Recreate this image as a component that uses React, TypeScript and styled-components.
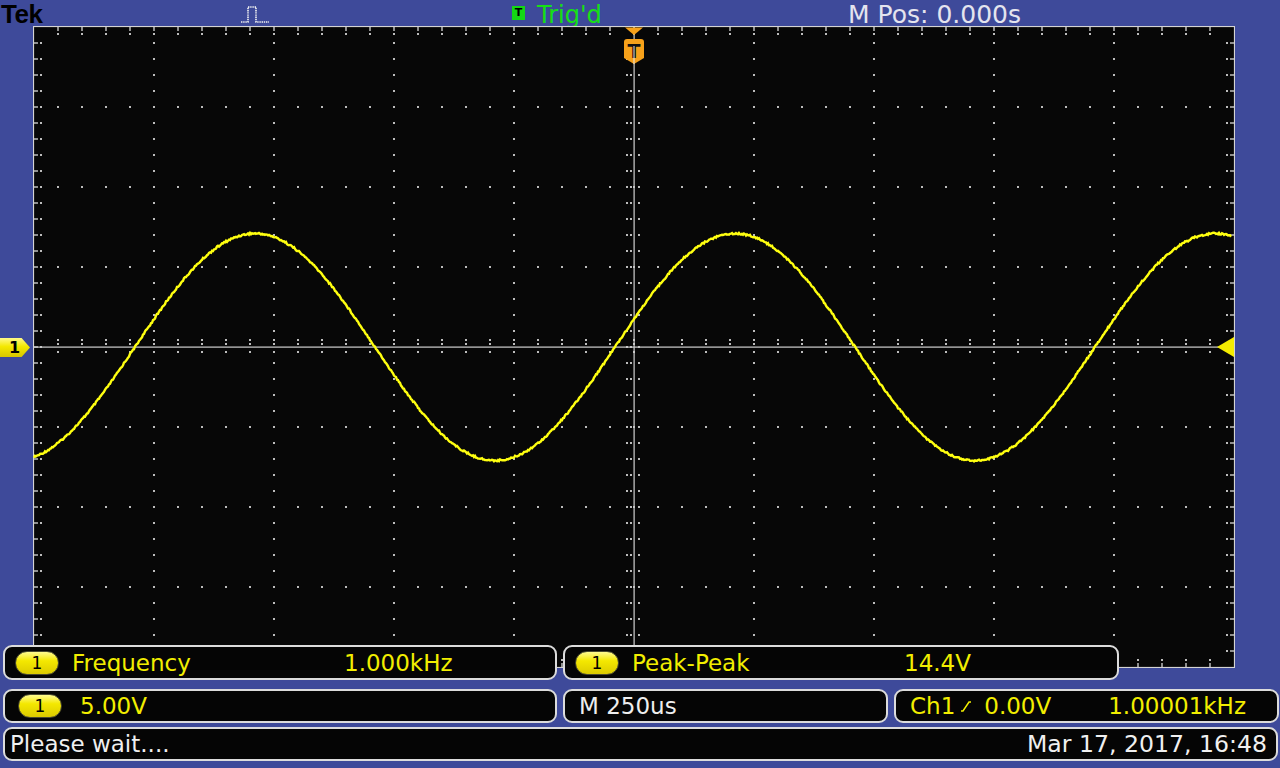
import React from 'react';
import styled, { createGlobalStyle } from 'styled-components';

const BLUE = '#3e4a9a';
const YELLOW = '#f2ee00';
const GRID = '#bdbdbd';

const GlobalStyle = createGlobalStyle`
  html, body {
    margin: 0;
    padding: 0;
    background: ${BLUE};
    overflow: hidden;
  }
`;

const Screen = styled.div`
  width: 1280px;
  height: 768px;
  background: ${BLUE};
  display: flex;
  flex-direction: column;
  font-family: 'DejaVu Sans', Verdana, sans-serif;
  overflow: hidden;
`;

const TopBar = styled.div`
  height: 26px;
  flex: none;
  display: grid;
  grid-template-columns: 240px 272px 336px 1fr;
  align-items: center;
`;

const Tek = styled.div`
  font-family: 'Liberation Sans', Arial, sans-serif;
  font-weight: 700;
  font-size: 26px;
  line-height: 26px;
  color: #000;
  letter-spacing: -0.5px;
  padding-left: 1px;
`;

const TrigGroup = styled.div`
  display: flex;
  align-items: center;
  gap: 12px;
`;

const TrigBox = styled.span`
  width: 13px;
  height: 14px;
  background: #14d814;
  color: #000;
  font-size: 11px;
  font-weight: 700;
  display: flex;
  align-items: center;
  justify-content: center;
  margin-top: -3px;
`;

const TopText = styled.span<{ $color: string; $size: number }>`
  color: ${({ $color }) => $color};
  font-size: ${({ $size }) => $size}px;
  line-height: 26px;
  padding-top: 2px;
  white-space: nowrap;
`;

const ScopeArea = styled.div`
  position: relative;
  height: 663px;
  flex: none;
`;

const Graticule = styled.svg`
  display: block;
  margin-left: 33px;
`;

const ChannelTab = styled.div`
  position: absolute;
  left: 0;
  top: 312px;
  width: 30px;
  height: 19px;
  clip-path: polygon(0 0, 72% 0, 100% 50%, 72% 100%, 0 100%);
  background: linear-gradient(#fff98a, #f4e800 45%, #d6c600);
  color: #000;
  font-size: 16px;
  font-weight: 700;
  line-height: 19px;
  padding-left: 9px;
  box-sizing: border-box;
`;

const MeasureRow = styled.div`
  position: absolute;
  left: 3px;
  top: 619px;
  display: flex;
  gap: 6px;
`;

const Row = styled.div<{ $mt?: number }>`
  display: flex;
  gap: 6px;
  margin-left: 3px;
  margin-top: ${({ $mt = 0 }) => $mt}px;
  flex: none;
`;

const Box = styled.div<{ $w: number; $h: number; $pl?: number; $pr?: number }>`
  width: ${({ $w }) => $w}px;
  height: ${({ $h }) => $h}px;
  box-sizing: border-box;
  border: 2px solid #dcdcdc;
  border-radius: 9px;
  background: #050505;
  display: flex;
  align-items: center;
  padding-left: ${({ $pl = 0 }) => $pl}px;
  padding-right: ${({ $pr = 0 }) => $pr}px;
  font-size: 23px;
  white-space: nowrap;
`;

const Badge = styled.span`
  width: 44px;
  height: 24px;
  box-sizing: border-box;
  border-radius: 12px;
  border: 1.5px solid #4a4a30;
  background: linear-gradient(#fffb90, #f4e800 40%, #dccb00);
  color: #000;
  font-size: 17px;
  display: flex;
  align-items: center;
  justify-content: center;
  flex: none;
`;

const Label = styled.span<{ $color: string; $ml?: number; $w?: number; $size?: number }>`
  color: ${({ $color }) => $color};
  margin-left: ${({ $ml = 0 }) => $ml}px;
  width: ${({ $w }) => ($w ? `${$w}px` : 'auto')};
  font-size: ${({ $size = 23 }) => $size}px;
  flex: none;
`;

const Spacer = styled.span`
  flex: 1;
`;

const SlopeIcon = styled.svg`
  margin-left: 5px;
  flex: none;
`;

const W = 1202;
const H = 642;
const CX = 601;
const CY = 321;

function gridDots() {
  const dots: React.ReactElement[] = [];
  let k = 0;
  // horizontal division rows
  for (let j = 1; j < 8; j++) {
    if (j === 4) continue;
    const y = 1 + 80 * j;
    for (let i = 1; i < 50; i++) {
      dots.push(<rect key={k++} x={1 + 24 * i - 1} y={y - 1} width={2} height={2} fill={GRID} />);
    }
  }
  // vertical division columns
  for (let c = 1; c < 10; c++) {
    if (c === 5) continue;
    const x = 1 + 120 * c;
    for (let i = 1; i < 40; i++) {
      if (i % 5 === 0) continue;
      dots.push(<rect key={k++} x={x - 1} y={1 + 16 * i - 1} width={2} height={2} fill={GRID} />);
    }
  }
  // edge ticks top/bottom + center line ticks
  for (let i = 1; i < 50; i++) {
    const x = 1 + 24 * i;
    dots.push(<rect key={k++} x={x - 0.75} y={1} width={1.5} height={4} fill={GRID} />);
    dots.push(<rect key={k++} x={x - 1} y={7} width={2} height={2} fill={GRID} />);
    dots.push(<rect key={k++} x={x - 0.75} y={H - 5} width={1.5} height={4} fill={GRID} />);
    dots.push(<rect key={k++} x={x - 1} y={H - 9} width={2} height={2} fill={GRID} />);
    for (const d of [-7, -3, 5]) {
      dots.push(<rect key={k++} x={x - 1} y={CY + d - 1} width={2} height={2} fill={GRID} />);
    }
  }
  // edge ticks left/right + center line ticks
  for (let i = 1; i < 40; i++) {
    const y = 1 + 16 * i;
    dots.push(<rect key={k++} x={1} y={y - 0.75} width={4} height={1.5} fill={GRID} />);
    dots.push(<rect key={k++} x={7} y={y - 1} width={2} height={2} fill={GRID} />);
    dots.push(<rect key={k++} x={W - 5} y={y - 0.75} width={4} height={1.5} fill={GRID} />);
    dots.push(<rect key={k++} x={W - 9} y={y - 1} width={2} height={2} fill={GRID} />);
    for (const d of [-7, -3, 5]) {
      dots.push(<rect key={k++} x={CX + d - 1} y={y - 1} width={2} height={2} fill={GRID} />);
    }
  }
  return dots;
}

function tracePoints() {
  const pts: string[] = [];
  for (let px = 1; px <= 1198; px++) {
    const ax = 33 + px;
    const h = Math.sin(px * 12.9898) * 43758.5453;
    const noise = (h - Math.floor(h) - 0.5) * 1.8;
    const y = CY - 113.5 * Math.sin((2 * Math.PI * (ax - 615)) / 480) + noise;
    pts.push(`${px},${y.toFixed(1)}`);
  }
  return pts.join(' ');
}

const dots = gridDots();
const trace = tracePoints();

export default function App() {
  return (
    <>
      <GlobalStyle />
      <Screen>
        <TopBar>
          <Tek>Tek</Tek>
          <svg width="30" height="20" viewBox="0 0 30 20">
            <polyline
              points="1,18 8,18 8,3 16,3 16,18 29,18"
              fill="none"
              stroke="#f4f4f4"
              strokeWidth="1.6"
              strokeDasharray="1.4 0.8"
            />
          </svg>
          <TrigGroup>
            <TrigBox>T</TrigBox>
            <TopText $color="#16e016" $size={24}>Trig'd</TopText>
          </TrigGroup>
          <TopText $color="#e4e4ee" $size={25}>M Pos: 0.000s</TopText>
        </TopBar>

        <ScopeArea>
          <Graticule width={W} height={H} viewBox={`0 0 ${W} ${H}`}>
            <rect x="0" y="0" width={W} height={H} fill="#070707" />
            {dots}
            <rect x={CX - 0.5} y="0" width="1.2" height={H} fill="#d0d0d0" />
            <rect x="0" y={CY - 0.5} width={W} height="1.2" fill="#d0d0d0" />
            <rect x="0.5" y="0.5" width={W - 1} height={H - 1} fill="none" stroke="#d4d4d4" strokeWidth="1.2" />
            <polyline points={trace} fill="none" stroke="#ffff10" strokeWidth="2.4" strokeLinejoin="miter" />
            {/* trigger position marker */}
            <polygon points="592,1.5 610,1.5 601,9" fill="#f7a11a" />
            <path
              d="M591,16 Q591,13 594,13 L608,13 Q611,13 611,16 L611,32 L601,38 L591,32 Z"
              fill="#f7a11a"
            />
            <text
              x={601}
              y={32}
              textAnchor="middle"
              fontFamily="DejaVu Sans, sans-serif"
              fontWeight="700"
              fontSize="19"
              fill="#111"
            >
              T
            </text>
            <rect x={CX - 0.5} y="20" width="1" height="18" fill="#e8e8e8" />
            {/* trigger level marker */}
            <polygon points="1184,321 1201,311 1201,331" fill="#f4ec00" />
          </Graticule>
          <ChannelTab>1</ChannelTab>
          <MeasureRow>
            <Box $w={554} $h={35} $pl={10}>
              <Badge>1</Badge>
              <Label $color={YELLOW} $ml={13} $w={272}>Frequency</Label>
              <Label $color={YELLOW}>1.000kHz</Label>
            </Box>
            <Box $w={556} $h={35} $pl={10}>
              <Badge>1</Badge>
              <Label $color={YELLOW} $ml={13} $w={272}>Peak-Peak</Label>
              <Label $color={YELLOW}>14.4V</Label>
            </Box>
          </MeasureRow>
        </ScopeArea>

        <Row>
          <Box $w={554} $h={34} $pl={13}>
            <Badge>1</Badge>
            <Label $color={YELLOW} $ml={18}>5.00V</Label>
          </Box>
          <Box $w={325} $h={34} $pl={14}>
            <Label $color="#eeeeee">M 250us</Label>
          </Box>
          <Box $w={385} $h={34} $pl={14} $pr={31}>
            <Label $color={YELLOW}>Ch1</Label>
            <SlopeIcon width="12" height="14" viewBox="0 0 12 14">
              <polyline points="1,12 3,12 9,3 11,3" fill="none" stroke={YELLOW} strokeWidth="1.5" />
            </SlopeIcon>
            <Label $color={YELLOW} $ml={12}>0.00V</Label>
            <Spacer />
            <Label $color={YELLOW}>1.00001kHz</Label>
          </Box>
        </Row>
        <Row $mt={4}>
          <Box $w={1275} $h={34} $pl={5} $pr={9}>
            <Label $color="#f0f0f0">Please wait....</Label>
            <Spacer />
            <Label $color="#f0f0f0" $size={23.6}>Mar 17, 2017, 16:48</Label>
          </Box>
        </Row>
      </Screen>
    </>
  );
}
